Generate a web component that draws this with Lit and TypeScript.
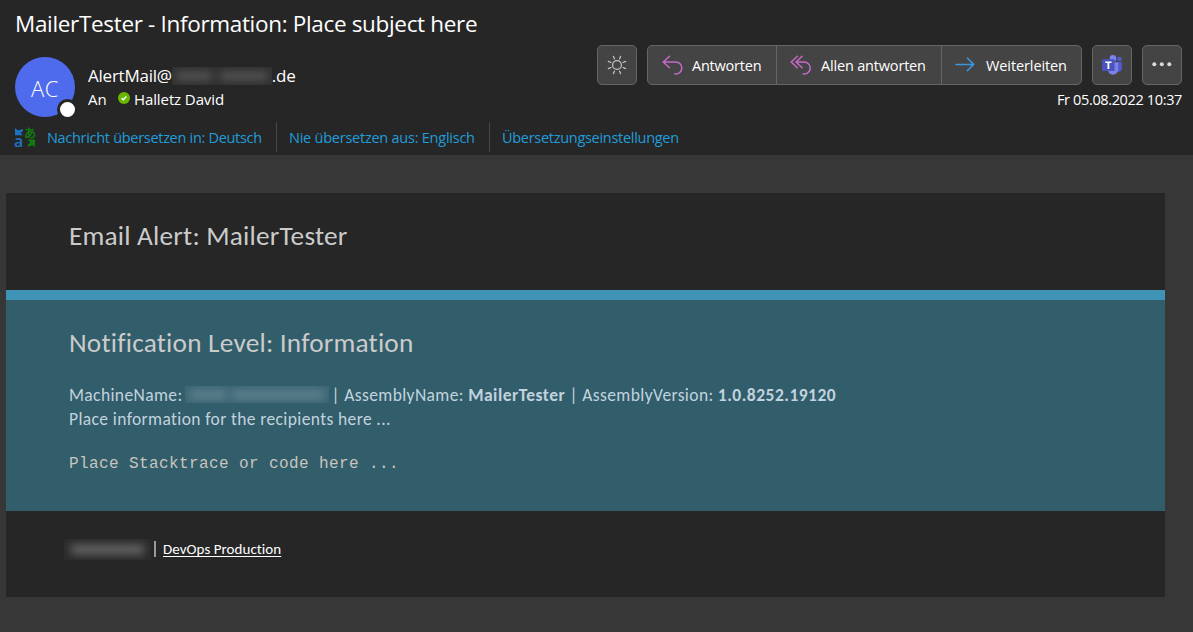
import { LitElement, html, svg, css } from "lit";
import { customElement } from "lit/decorators.js";

const sunRays = [0, 45, 90, 135, 180, 225, 270, 315];

const sunIcon = html`<svg width="20" height="20" viewBox="0 0 20 20" fill="none" stroke="#c4c4c4" stroke-width="1.2" stroke-linecap="round">
  <circle cx="10" cy="10" r="4.4" />
  ${sunRays.map((a) => svg`<path d="M10 3.5V.6" transform="rotate(${a + 22.5} 10 10)" />`)}
</svg>`;

const replyIcon = html`<svg width="22" height="20" viewBox="0 0 22 20" fill="none" stroke="#c869c9" stroke-width="1.5" stroke-linecap="round" stroke-linejoin="round">
  <path d="M7.5 1.2 1.2 7l6.3 5.8M1.4 7h12.4a6 6 0 0 1 0 12h-1" />
</svg>`;

const replyAllIcon = html`<svg width="22" height="20" viewBox="0 0 22 20" fill="none" stroke="#c869c9" stroke-width="1.5" stroke-linecap="round" stroke-linejoin="round">
  <path d="M7.3 1.2 1.2 7l6.1 5.8M12.1 1.2 6 7l6.1 5.8M6.2 7h8a6 6 0 0 1 0 12h-1" />
</svg>`;

const forwardIcon = html`<svg width="20" height="20" viewBox="0 0 20 20" fill="none" stroke="#3a96dd" stroke-width="1.5" stroke-linecap="round" stroke-linejoin="round">
  <path d="M.9 9.4h17.8M12.3 3l6.4 6.4-6.4 6.4" />
</svg>`;

const teamsIcon = html`<svg width="20" height="20" viewBox="0 0 20 20">
  <circle cx="17.4" cy="4.2" r="2.4" fill="#5059c9" />
  <path d="M13.5 7.3H20v6.2a3.4 3.4 0 0 1-5.5 2.7z" fill="#5059c9" />
  <circle cx="11" cy="3.4" r="3.3" fill="#7b83eb" />
  <path d="M5.6 7.3h10.7v7a5.35 5.35 0 0 1-10.7 0z" fill="#7b83eb" />
  <rect x="0" y="4.2" width="12.6" height="11.8" rx="1" fill="#4b53bc" />
  <path d="M3.3 6.4h6.2v1.7H7.3v6H5.5v-6H3.3z" fill="#fff" />
</svg>`;

const moreIcon = html`<svg width="20" height="20" viewBox="0 0 20 20" fill="#dcdcdc">
  <circle cx="2.3" cy="9.3" r="2" /><circle cx="9.8" cy="9.3" r="2" /><circle cx="17.3" cy="9.3" r="2" />
</svg>`;

const translateArrows = html`<svg class="arrows" width="21" height="21" viewBox="0 0 21 21">
  <path d="M0 1l3 2.4L8 2v2L5.6 6 8 8.3H0z" fill="#1e73c8" />
  <path d="M12.5 12.5H20V20l-2.2-1.8-5 1.5v-2.4l2.7-1.8z" fill="#107c10" />
</svg>`;

const checkIcon = html`<svg width="12" height="12" viewBox="0 0 12 12">
  <circle cx="6" cy="6" r="6" fill="#6bb700" />
  <path d="M3.6 6.2l1.7 1.6 3-3.3" fill="none" stroke="#fff" stroke-width="1.4" />
</svg>`;

@customElement("mail-header")
class MailHeader extends LitElement {
  static styles = css`
    :host {
      display: block;
      height: 155px;
      box-sizing: border-box;
      padding-top: 9px;
      background: #262626;
      color: #fff;
      font: 14.5px/24px "Open Sans", "Noto Sans", sans-serif;
      white-space: nowrap;
    }
    svg { display: block; flex: none; }
    .subject { padding-left: 15px; font-size: 22.5px; line-height: 30px; letter-spacing: -0.33px; }
    .main { display: flex; justify-content: space-between; height: 77px; padding: 6px 11px 0 15px; }
    .person { display: flex; gap: 13px; padding-top: 12px; }
    .avatar {
      position: relative; width: 60px; height: 60px; border-radius: 50%;
      background: #4f6bed; font-size: 22px; line-height: 62px; text-align: center;
      font-weight: 300; letter-spacing: 0.6px;
    }
    .presence {
      position: absolute; right: -3px; bottom: -3px; width: 15px; height: 15px;
      border: 3px solid #262626; border-radius: 50%; background: #fff;
    }
    .names { padding-top: 7px; }
    .from { display: flex; align-items: center; height: 24px; font-size: 17px; letter-spacing: -0.23px; }
    .domain {
      width: 100px; height: 18px; box-sizing: border-box; padding: 5px 4px; overflow: hidden;
      background: #303030; display: flex; gap: 8px;
    }
    .domain i { flex: 3; height: 8px; background: #565656; filter: blur(4px); }
    .domain i + i { flex: 4; }
    .to { display: flex; align-items: center; height: 24px; margin-top: -1px; font-size: 15px; letter-spacing: -0.1px; }
    .to svg { margin: 0 4px 2px 11.5px; }
    .side { display: flex; flex-direction: column; align-items: flex-end; gap: 3px; }
    .actions { display: flex; gap: 10px; }
    .group { display: flex; border: 1px solid #666; border-radius: 5px; background: #444; height: 38px; }
    .btn { display: flex; align-items: center; box-sizing: border-box; line-height: 38px; padding-left: 14px; }
    .btn + .btn { border-left: 1px solid #666; padding-left: 13px; }
    .btn span { margin-top: 2px; }
    .square { width: 38px; justify-content: center; padding: 0; }
    .reply { width: 128px; gap: 8px; letter-spacing: -0.22px; }
    .all { width: 165px; gap: 9px; letter-spacing: -0.18px; }
    .forward { width: 140px; gap: 11px; letter-spacing: -0.1px; }
    .date { letter-spacing: -0.36px; }
    .translate { display: flex; height: 30px; padding-left: 15px; line-height: 31px; color: #219ddb; }
    .icon { position: relative; width: 21px; height: 21px; margin: 5px 11px 0 0; }
    .arrows { position: absolute; inset: 0; }
    .kana { position: absolute; left: 9px; top: 0; color: #107c10; font: bold 12px/12px "Noto Sans CJK JP", sans-serif; }
    .latin { position: absolute; left: -1px; top: 7px; color: #1e73c8; font: 600 16px/14px "Open Sans", sans-serif; }
    .link + .link { border-left: 1px solid #484848; padding-left: 12px; margin-left: 13px; }
    .l1 { width: 216px; letter-spacing: -0.3px; }
    .l2 { width: 187px; letter-spacing: -0.24px; }
    .l3 { letter-spacing: -0.29px; }
  `;
  render() {
    return html`
      <div class="subject">MailerTester - Information: Place subject here</div>
      <div class="main">
        <div class="person">
          <div class="avatar">AC<span class="presence"></span></div>
          <div class="names">
            <div class="from">AlertMail@<span class="domain"><i></i><i></i></span>.de</div>
            <div class="to">An${checkIcon}Halletz David</div>
          </div>
        </div>
        <div class="side">
          <div class="actions">
            <div class="group"><div class="btn square">${sunIcon}</div></div>
            <div class="group">
              <div class="btn reply">${replyIcon}<span>Antworten</span></div>
              <div class="btn all">${replyAllIcon}<span>Allen antworten</span></div>
              <div class="btn forward">${forwardIcon}<span>Weiterleiten</span></div>
            </div>
            <div class="group"><div class="btn square">${teamsIcon}</div></div>
            <div class="group"><div class="btn square">${moreIcon}</div></div>
          </div>
          <div class="date">Fr 05.08.2022 10:37</div>
        </div>
      </div>
      <div class="translate">
        <div class="icon">${translateArrows}<span class="kana">あ</span><span class="latin">a</span></div>
        <div class="link l1">Nachricht übersetzen in: Deutsch</div>
        <div class="link l2">Nie übersetzen aus: Englisch</div>
        <div class="link l3">Übersetzungseinstellungen</div>
      </div>
    `;
  }
}

@customElement("alert-card")
class AlertCard extends LitElement {
  static styles = css`
    :host {
      display: block;
      margin: 38px 28px 0 6px;
      font: 17.5px/24px Carlito, Lato, sans-serif;
      letter-spacing: 0.38px;
      color: #c1d3df;
      white-space: nowrap;
    }
    section { box-sizing: border-box; padding: 27px 63px 0; background: #262626; }
    .top { height: 97px; }
    .body { height: 221px; border-top: 10px solid #3f94b6; background: #325d6a; }
    .title { font-size: 27.3px; line-height: 32px; letter-spacing: 0.2px; color: #cbcbcb; }
    .info { margin-top: 24px; }
    .line { display: flex; align-items: center; }
    .line pre { margin: 0; font: inherit; }
    .line b { letter-spacing: 0.48px; }
    .machine {
      width: 144px; height: 17px; box-sizing: border-box; padding: 4px 5px; margin: 0 2px 1px 3px;
      overflow: hidden; background: #3c6573; display: flex; gap: 5px;
    }
    .machine i { flex: 2; height: 9px; background: #5e828f; filter: blur(4px); }
    .machine i + i { flex: 5; }
    .code { margin: 21px 0 0; font: 16px/24px "Courier New", "Liberation Mono", monospace; letter-spacing: 0.4px; color: #c8c5bf; }
    .foot { height: 86px; padding: 28px 58px 0; display: flex; font-size: 15px; line-height: 20px; letter-spacing: 0.05px; color: #fff; }
    .company { width: 87px; height: 21px; box-sizing: border-box; padding: 6px 7px; overflow: hidden; background: #2b2b2b; }
    .company i { display: block; height: 9px; background: #686868; filter: blur(4px); }
    .bar { width: 2px; height: 16px; margin: 2px 7px 0 3px; background: #999; }
    .link { text-decoration: underline; text-decoration-thickness: 1px; text-underline-offset: 2px; }
  `;
  render() {
    return html`
      <section class="top"><div class="title">Email Alert: MailerTester</div></section>
      <section class="body">
        <div class="title">Notification Level: Information</div>
        <div class="info">
          <div class="line">MachineName:<span class="machine"><i></i><i></i></span><pre>| AssemblyName: <b>MailerTester</b> | AssemblyVersion: <b>1.0.8252.19120</b></pre></div>
          <div>Place information for the recipients here ...</div>
        </div>
        <div class="code">Place Stacktrace or code here ...</div>
      </section>
      <section class="foot">
        <span class="company"><i></i></span><span class="bar"></span><span class="link">DevOps Production</span>
      </section>
    `;
  }
}

@customElement("app-root")
class AppRoot extends LitElement {
  static styles = css`
    :host { display: block; height: 632px; overflow: hidden; background: #373737; }
  `;
  render() {
    return html`<mail-header></mail-header><alert-card></alert-card>`;
  }
}
